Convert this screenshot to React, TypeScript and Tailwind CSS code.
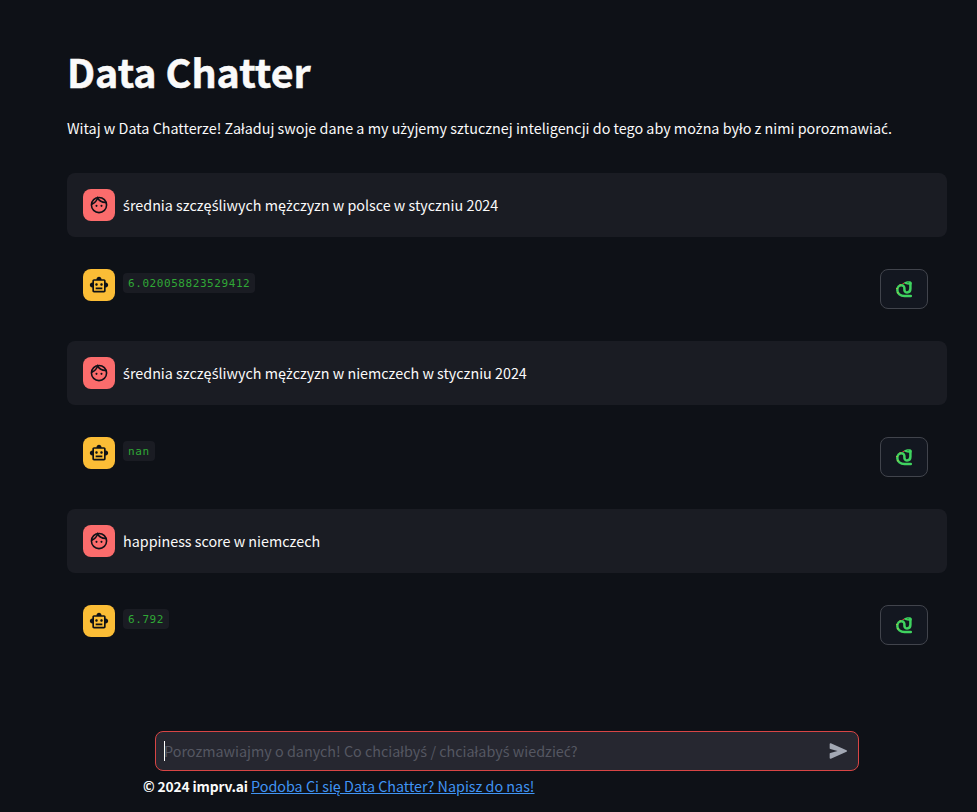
import { Fragment } from "react";
import { MdOutlineSmartToy } from "react-icons/md";

const sans = "font-['Noto_Sans_CJK_SC','Noto_Sans',sans-serif]";

function Polish({ children }: { children: string }) {
  return (
    <>
      {children.split(/([śćżźń])/).map((part, i) =>
        i % 2 ? (
          <span key={i} className="font-['Noto_Sans',sans-serif] text-[14.4px] leading-none">
            {part}
          </span>
        ) : (
          <Fragment key={i}>{part}</Fragment>
        ),
      )}
    </>
  );
}

function Face() {
  return (
    <svg width="20" height="20" viewBox="0 0 24 24" fill="none" stroke="currentColor" strokeWidth="1.9">
      <circle cx="12" cy="12" r="9.1" />
      <path d="M3.3 11C6.8 9.7 9.2 7.2 10.3 3.6C12.6 7.3 16 9.2 20.6 8.8" />
      <circle cx="9" cy="13" r="1.25" fill="currentColor" stroke="none" />
      <circle cx="15" cy="13" r="1.25" fill="currentColor" stroke="none" />
    </svg>
  );
}

function SendArrow() {
  return (
    <svg width="20" height="20" viewBox="0 0 24 24" className="ml-auto text-[#a3a8b4]" fill="currentColor">
      <path d="M3.4 21.2L22.2 12.9C23 12.5 23 11.5 22.2 11.1L3.4 2.8C2.7 2.5 2 3 2 3.7V8.6C2 9.1 2.3 9.5 2.8 9.6L11.5 12L2.8 14.4C2.3 14.5 2 14.9 2 15.4V20.3C2 21 2.7 21.5 3.4 21.2Z" />
    </svg>
  );
}

function Snake() {
  return (
    <svg width="18" height="18" viewBox="0 0 18 18" fill="none">
      <path
        d="M15.8 16.1H9.5C5.5 16.1 2.3 13.6 2.3 9.9C2.3 7.2 4.2 5.3 6.5 5.3C8.4 5.3 9.5 6.7 9.4 8.5C9.2 10.7 9.9 12.4 12 12.4C14.1 12.4 15.4 11 15.4 8.8V3.4"
        stroke="#3fd35f"
        strokeWidth="2.5"
        strokeLinecap="round"
      />
      <path d="M8.6 3.1C9.6 1.3 14.2 .8 15.8 1.5C17.2 2.2 17 4.6 15.8 4.9C13.8 4.9 10.8 4.9 8.6 3.1Z" fill="#3fd35f" />
      <path d="M7.6 3.5H9.4" stroke="#d13438" />
      <path d="M1.4 8.5H2.4M2.4 12.8H3.4M4.6 4.8H5.6" stroke="#f9c23c" />
      <circle cx="13" cy="2.6" r=".6" fill="#176b37" />
    </svg>
  );
}

function Question({ text }: { text: string }) {
  return (
    <div className="flex h-16 items-center gap-2 rounded-lg bg-[#1a1c23] pl-4">
      <div className="flex size-8 shrink-0 items-center justify-center rounded-lg bg-[#fb6c6c] text-[#0e1117]">
        <Face />
      </div>
      <p className="whitespace-nowrap text-[14.33px] leading-6">
        <Polish>{text}</Polish>
      </p>
    </div>
  );
}

function Answer({ value }: { value: string }) {
  return (
    <div className="flex h-10 items-start pl-4 pr-[19px]">
      <div className="flex size-8 shrink-0 items-center justify-center rounded-lg bg-[#fbbd36] text-[#0e1117]">
        <MdOutlineSmartToy size={20} />
      </div>
      <code className="ml-2 mt-1 h-5 rounded bg-[#1a1c23] px-[5px] font-['DejaVu_Sans_Mono',monospace] text-[11px] leading-[22px] tracking-[0.57px] text-[#30a836]">
        {value}
      </code>
      <button className="ml-auto flex h-10 w-12 items-center justify-center rounded-lg border border-[#41444c] bg-[#131720]">
        <Snake />
      </button>
    </div>
  );
}

export default function App() {
  return (
    <div className={`h-[812px] w-[977px] overflow-hidden bg-[#0e1117] text-[#fafafa] ${sans}`}>
      <header className="ml-[67px] h-[173px] pt-[44px]">
        <h1 className="h-[53px] whitespace-nowrap text-[39.4px] font-bold leading-[53px] [-webkit-text-stroke:0.5px_#fafafa]">
          Data Chatter
        </h1>
        <p className="mt-[19px] whitespace-nowrap text-[14.35px] leading-6">
          <Polish>
            Witaj w Data Chatterze! Załaduj swoje dane a my użyjemy sztucznej inteligencji do tego aby można było z nimi porozmawiać.
          </Polish>
        </p>
      </header>
      <main className="ml-[67px] flex w-[880px] flex-col gap-8">
        <Question text="średnia szczęśliwych mężczyzn w polsce w styczniu 2024" />
        <Answer value="6.020058823529412" />
        <Question text="średnia szczęśliwych mężczyzn w niemczech w styczniu 2024" />
        <Answer value="nan" />
        <Question text="happiness score w niemczech" />
        <Answer value="6.792" />
      </main>
      <footer className="mt-[86px]">
        <div className="ml-[155px] flex h-10 w-[704px] items-center rounded-lg border border-[#d84545] bg-[#262730] pl-2 pr-[10px]">
          <div className="h-5 w-px bg-white" />
          <span className="-ml-px whitespace-nowrap text-[14.35px] text-[#555762]">
            <Polish>Porozmawiajmy o danych! Co chciałbyś / chciałabyś wiedzieć?</Polish>
          </span>
          <SendArrow />
        </div>
        <p className="ml-[143px] mt-[3px] whitespace-nowrap text-[14.33px] leading-6">
          <span className="text-[13.8px] font-bold tracking-[-0.15px]">© 2024 imprv.ai</span>{" "}
          <a className="text-[#4094f4] underline">Podoba Ci się Data Chatter? Napisz do nas!</a>
        </p>
      </footer>
    </div>
  );
}
